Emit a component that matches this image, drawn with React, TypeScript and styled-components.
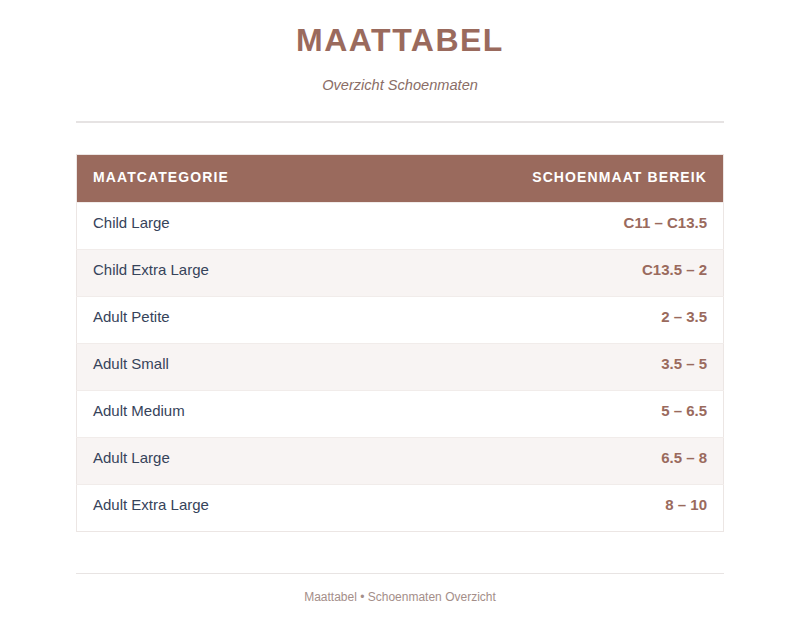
import React from "react";
import styled, { createGlobalStyle } from "styled-components";

const GlobalStyle = createGlobalStyle`
  body {
    margin: 0;
    background: #ffffff;
    font-family: "Liberation Sans", Arial, sans-serif;
  }
`;

const Page = styled.div`
  width: 648px;
  margin: 0 auto;
  padding: 22px 0 0;
`;

const Header = styled.header`
  text-align: center;
  padding-bottom: 28px;
  border-bottom: 2px solid #e6e3e3;
  margin-bottom: 31px;
`;

const Title = styled.h1`
  margin: 0;
  font-size: 32px;
  font-weight: bold;
  letter-spacing: 1.5px;
  color: #9a6a5d;
  line-height: 37px;
`;

const Subtitle = styled.p`
  margin: 18px 0 0;
  font-size: 14.6px;
  font-style: italic;
  color: #8a6d66;
`;

const Table = styled.table`
  width: 100%;
  border-collapse: collapse;
  border: 1px solid #ece6e4;
`;

const HeadCell = styled.th<{ $align?: "left" | "right" }>`
  background: #9a6a5d;
  color: #ffffff;
  font-size: 14px;
  line-height: 18px;
  font-weight: bold;
  letter-spacing: 1.1px;
  text-transform: uppercase;
  text-align: ${(p) => p.$align ?? "left"};
  padding: 13px 16px 16px;
`;

const Row = styled.tr<{ $striped: boolean }>`
  background: ${(p) => (p.$striped ? "#f8f4f3" : "#ffffff")};
  border-top: 1px solid #f1ecea;
`;

const NameCell = styled.td`
  padding: 11px 16px 17px;
  font-size: 15px;
  line-height: 18px;
  color: #36435a;
`;

const RangeCell = styled.td`
  padding: 11px 16px 17px;
  font-size: 15px;
  line-height: 18px;
  font-weight: bold;
  color: #9a6a5d;
  text-align: right;
`;

const Footer = styled.footer`
  margin-top: 41px;
  border-top: 1px solid #e8e4e3;
  padding-top: 16px;
  text-align: center;
  font-size: 12px;
  color: #a48e89;
`;

const sizes = [
  { name: "Child Large", range: "C11 – C13.5" },
  { name: "Child Extra Large", range: "C13.5 – 2" },
  { name: "Adult Petite", range: "2 – 3.5" },
  { name: "Adult Small", range: "3.5 – 5" },
  { name: "Adult Medium", range: "5 – 6.5" },
  { name: "Adult Large", range: "6.5 – 8" },
  { name: "Adult Extra Large", range: "8 – 10" },
];

const App = () => {
  return (
    <>
      <GlobalStyle />
      <Page>
        <Header>
          <Title>MAATTABEL</Title>
          <Subtitle>Overzicht Schoenmaten</Subtitle>
        </Header>
        <Table>
          <thead>
            <tr>
              <HeadCell>Maatcategorie</HeadCell>
              <HeadCell $align="right">Schoenmaat Bereik</HeadCell>
            </tr>
          </thead>
          <tbody>
            {sizes.map((s, i) => (
              <Row key={s.name} $striped={i % 2 === 1}>
                <NameCell>{s.name}</NameCell>
                <RangeCell>{s.range}</RangeCell>
              </Row>
            ))}
          </tbody>
        </Table>
        <Footer>Maattabel • Schoenmaten Overzicht</Footer>
      </Page>
    </>
  );
};

export default App;
